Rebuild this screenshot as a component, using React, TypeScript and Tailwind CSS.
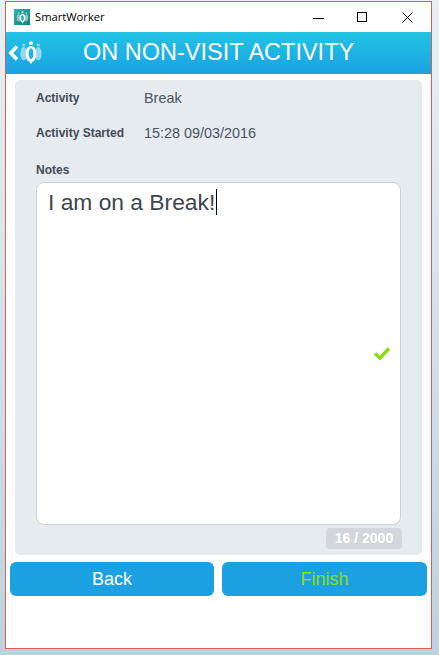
import React from 'react';

const Logo = ({ size, dark }: { size: number; dark?: boolean }) => (
  <svg width={size} height={size} viewBox="0 0 36 36" className="shrink-0">
    <ellipse cx="7" cy="19" rx="5" ry="10" fill="#ffffff" fillOpacity={dark ? 0.45 : 0.5} />
    <ellipse cx="29" cy="19" rx="5" ry="10" fill="#ffffff" fillOpacity={dark ? 0.45 : 0.5} />
    <circle cx="7" cy="6" r="2.4" fill="#ffffff" fillOpacity="0.5" />
    <circle cx="29" cy="6" r="2.4" fill="#ffffff" fillOpacity="0.5" />
    <circle cx="18" cy="3.5" r="3" fill="#ffffff" />
    <path
      d="M18 8c5 0 8 4 8 11s-3 11-6 12l-2 4-2-4c-3-1-6-5-6-12s3-11 8-11z"
      fill="#ffffff"
    />
    <ellipse cx="18" cy="19" rx="3.6" ry="8" fill={dark ? '#1ea5a8' : '#1fb3e0'} />
  </svg>
);

export default function App() {
  return (
    <div className="w-[439px] h-[655px] overflow-hidden pl-[5px] pt-px bg-gradient-to-b from-[#e8f0f4] to-[#bcd3df] font-['Liberation_Sans',Arial,sans-serif]">
      <div className="w-[427px] h-[648px] bg-white border border-[#d9604f] flex flex-col">
        {/* Window title bar */}
        <div className="h-[30px] flex items-center shrink-0">
          <div className="ml-2 w-4 h-4 flex items-center justify-center bg-gradient-to-br from-[#2bb5b0] to-[#12807f]">
            <Logo size={13} dark />
          </div>
          <span className="ml-[5px] text-[11.2px] text-black font-['Open_Sans',sans-serif]">SmartWorker</span>
          <div className="ml-auto flex items-center text-black">
            <svg width="11" height="11" viewBox="0 0 11 11" className="mr-[33px]">
              <path d="M0 6.500h11" stroke="#000000" strokeWidth="1" />
            </svg>
            <svg width="10" height="10" viewBox="0 0 10 10" className="mr-[35px]">
              <rect x="0.500" y="0.500" width="9" height="9" fill="none" stroke="#000000" strokeWidth="1" />
            </svg>
            <svg width="11" height="11" viewBox="0 0 11 11" className="mr-[18px]">
              <path d="M0.500 0.500l10 10M10.500 0.500l-10 10" stroke="#000000" strokeWidth="1" />
            </svg>
          </div>
        </div>

        {/* App header */}
        <div className="h-[42px] shrink-0 flex items-center bg-gradient-to-b from-[#22c4e4] to-[#1ba1e2]">
          <svg width="11" height="16" viewBox="0 0 11 16" className="ml-[2px] shrink-0">
            <path d="M9 1.500 2.800 8 9 14.500" fill="none" stroke="#ffffff" strokeWidth="3.500" />
          </svg>
          <Logo size={24} />
          <h1 className="ml-[40px] text-[23.5px] leading-none text-white whitespace-nowrap">ON NON-VISIT ACTIVITY</h1>
        </div>

        {/* Activity panel */}
        <div className="mt-[6px] ml-[9px] w-[407px] h-[475px] shrink-0 bg-[#e6ebef] rounded-[5px] px-[21px] flex flex-col">
          <div className="flex items-center h-[18px] mt-[9px]">
            <span className="w-[108px] text-[12px] font-bold text-[#444b55]">Activity</span>
            <span className="mt-[2px] text-[14.4px] text-[#4a5460]">Break</span>
          </div>
          <div className="flex items-center h-[18px] mt-[17px]">
            <span className="w-[108px] text-[12px] font-bold text-[#444b55]">Activity Started</span>
            <span className="mt-[2px] text-[14.4px] text-[#4a5460]">15:28 09/03/2016</span>
          </div>
          <span className="mt-[21px] text-[12px] leading-[14px] font-bold text-[#444b55]">Notes</span>
          <div className="mt-[5px] h-[343px] bg-white border border-[#cdd2d6] rounded-[8px] relative px-[11px] pt-[4px]">
            <div className="flex items-start">
              <span className="text-[22.800px] leading-[30px] text-[#3e4650]">I am on a Break!</span>
              <span className="w-px h-[26px] bg-black mt-[2px] ml-px" />
            </div>
            <svg width="18" height="15" viewBox="0 0 18 15" className="absolute right-[9px] top-[163px]">
              <path d="M2 7.500l5 4.500 9-9.500" fill="none" stroke="#8fdc12" strokeWidth="3.600" />
            </svg>
          </div>
          <div className="mt-[3px] mr-[-1px] self-end w-[76px] h-[21px] bg-[#d3d7db] rounded-[3px] flex items-center justify-center text-[14px] font-bold text-white">
            16 / 2000
          </div>
        </div>

        {/* Actions */}
        <div className="mt-[7px] ml-1 flex gap-2 shrink-0">
          <button className="w-[204px] h-[34px] rounded-[6px] bg-[#1ba1e2] text-white text-[18px]">Back</button>
          <button className="w-[205px] h-[34px] rounded-[6px] bg-[#1ba1e2] text-[#8fdc12] text-[18px]">Finish</button>
        </div>
      </div>
    </div>
  );
}
